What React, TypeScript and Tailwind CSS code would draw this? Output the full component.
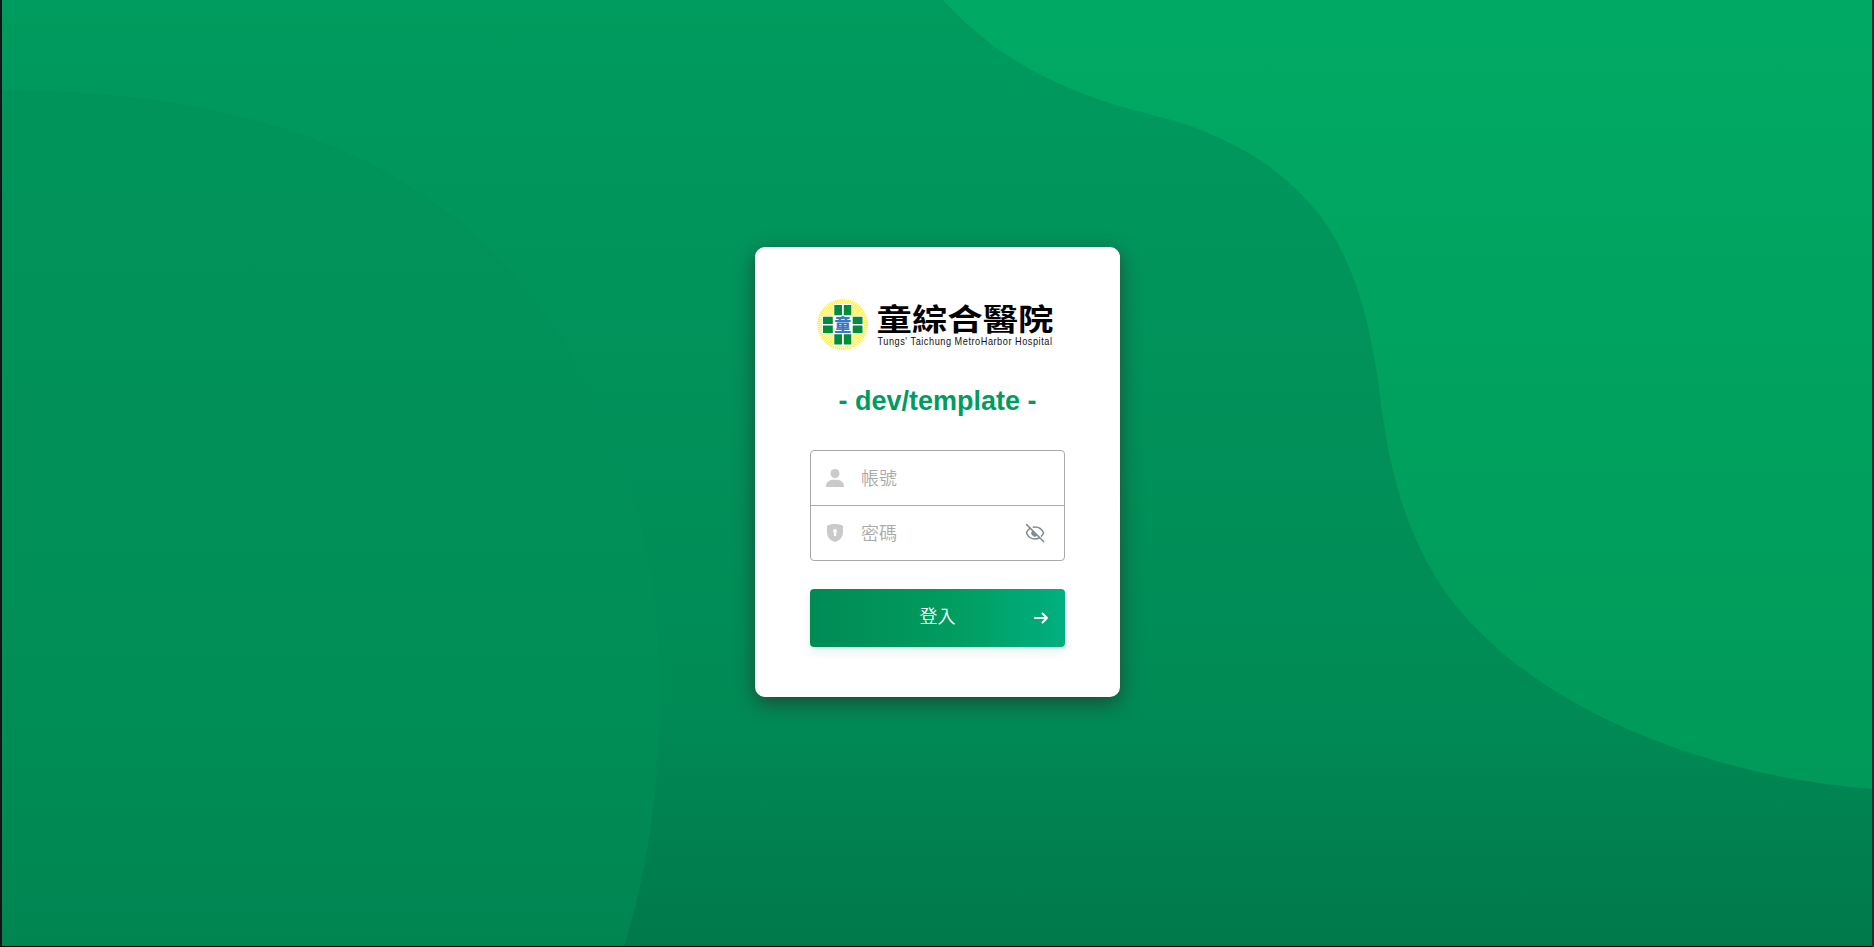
import React from "react";

function Background() {
  return (
    <svg className="absolute inset-0 h-full w-full" viewBox="0 0 1874 947" preserveAspectRatio="none" aria-hidden="true">
      <defs>
        <linearGradient id="base" x1="0" y1="0" x2="0" y2="1">
          <stop offset="0" stopColor="#009b5e" />
          <stop offset="0.42" stopColor="#009159" />
          <stop offset="0.74" stopColor="#008b55" />
          <stop offset="1" stopColor="#00794a" />
        </linearGradient>
        <linearGradient id="right" gradientUnits="userSpaceOnUse" x1="0" y1="0" x2="0" y2="789">
          <stop offset="0" stopColor="#00aa64" />
          <stop offset="1" stopColor="#009959" />
        </linearGradient>
        <linearGradient id="left" gradientUnits="userSpaceOnUse" x1="0" y1="90" x2="0" y2="947">
          <stop offset="0" stopColor="#00945a" />
          <stop offset="0.45" stopColor="#009058" />
          <stop offset="0.72" stopColor="#008e56" />
          <stop offset="1" stopColor="#008551" />
        </linearGradient>
      </defs>
      <rect width="1874" height="947" fill="url(#base)" />
      <path d="M0 90C165 90 320 120 434 202C560 289 660 470 660 690C660 780 650 862 624 947H0Z" fill="url(#left)" />
      <path d="M943 0C998 60 1065 94 1153 115C1243 137 1305 184 1336 240C1361 286 1370 330 1378 380C1388 465 1402 528 1446 593C1524 700 1690 775 1874 789V0Z" fill="url(#right)" />
      <rect width="2" height="947" fill="#141414" />
      <rect x="1872" width="2" height="947" fill="#2b2b33" />
      <rect y="946" width="1872" height="1" fill="#000" />
    </svg>
  );
}

function Emblem() {
  return (
    <svg className="size-[52px] shrink-0" viewBox="0 0 52 52" aria-hidden="true">
      <circle cx="25.7" cy="25.5" r="19" fill="none" stroke="#fff04a" strokeWidth="13" strokeDasharray="1.15 0.508" />
      <path d="M16.5 5H35V17H47V35H35V47H16.5V35H5V17H16.5Z" fill="#fff" />
      <g fill="#008c3a">
        <path d="M17.3 6H25V16.3H17.3zM26.8 6h7.5V16.3H26.8zM17.3 35.2H25V45.5H17.3zM26.8 35.2h7.5V45.5H26.8z" />
        <path d="M6 17.7H15.8V25H6zM6 26.6H15.8V34H6zM35.7 17.7H45.5V25H35.7zM35.7 26.6H45.5V34H35.7z" />
      </g>
      <text x="25.8" y="31.8" textAnchor="middle" fontSize="17" fontWeight="900" fill="#3a78c4" fontFamily="Noto Sans CJK TC, sans-serif">童</text>
    </svg>
  );
}

export default function App() {
  return (
    <main className="relative flex h-screen w-full items-center justify-center overflow-hidden font-['Liberation_Sans','Noto_Sans_CJK_TC',sans-serif]">
      <Background />
      <section className="relative mt-[-3px] ml-px flex h-[450px] w-[365px] flex-col items-center rounded-[10px] bg-white px-[55px] pt-[51px] shadow-[0_6px_20px_rgba(40,40,40,0.65)]">
        <div className="flex h-[54px] w-[241px] items-center gap-2">
          <Emblem />
          <svg className="h-[54px] w-[181px] shrink-0 overflow-visible" viewBox="0 0 181 54">
            <text x="-0.5" y="31.8" textLength="177" lengthAdjust="spacingAndGlyphs" fontSize="29.5" fontWeight="700" fill="#000" strokeLinejoin="round" fontFamily="Noto Sans CJK TC, sans-serif">童綜合醫院</text>
            <text x="0.5" y="46.7" textLength="175" lengthAdjust="spacingAndGlyphs" letterSpacing="0.7" fontSize="11.6" fill="#111" fontFamily="Liberation Sans, sans-serif">Tungs' Taichung MetroHarbor Hospital</text>
          </svg>
        </div>
        <h1 className="mt-[33px] text-[27px] leading-[33px] font-bold whitespace-nowrap text-[#009c5f]">- dev/template -</h1>
        <form className="mt-8 w-full" onSubmit={(e) => e.preventDefault()}>
          <div className="rounded-[4px] border border-[#a9a9a9]">
            <label className="flex h-[55px] items-center border-b border-[#a9a9a9] pl-[15px]">
              <svg className="size-[18px] shrink-0" viewBox="0 0 18 18" fill="#cacaca"><circle cx="9" cy="4.5" r="4.5" /><path d="M0 17.5C0 12.5 3.5 10.8 9 10.8S18 12.5 18 17.5Q18 18 17 18H1Q0 18 0 17.5Z" /></svg>
              <input className="mt-0.5 ml-[17px] w-40 text-[18px] font-[350] outline-none placeholder:text-[#a9a9a9]" placeholder="帳號" />
            </label>
            <label className="flex h-[54px] items-center pr-[19px] pl-[15px]">
              <svg className="size-[18px] shrink-0" viewBox="0 0 18 18" fill="#cacaca"><path fillRule="evenodd" d="M9 0C6 0 3 .7 1.5 1.5Q1 1.8 1 2.7V8C1 13 4 16.5 9 18C14 16.5 17 13 17 8V2.7Q17 1.8 16.5 1.5C15 .7 12 0 9 0ZM9 5A2 2 0 0 0 7.8 8.6V12H10.2V8.6A2 2 0 0 0 9 5Z" /></svg>
              <input className="mt-0.5 ml-[17px] min-w-0 flex-1 text-[18px] font-[350] outline-none placeholder:text-[#a9a9a9]" type="password" placeholder="密碼" />
              <svg className="size-5 shrink-0" viewBox="0 0 20 20" fill="none" stroke="#7f8a93" strokeWidth="1.5"><path d="M5.3 5.2C3.5 6.3 2.2 8 1.4 10C3.2 14 6.2 16 10 16C11.5 16 13 15.6 14.2 15M7.7 4.3C8.4 4.1 9.2 4 10 4C14 4 17 6.2 18.6 10C18 11.4 17.2 12.6 16 13.6M1.2 1.1L19 19" /><path d="M7.6 8A3 3 0 0 0 12 12.3Z" fill="#7f8a93" strokeWidth="1" /></svg>
            </label>
          </div>
          <button className="relative mt-7 flex h-[58px] w-full items-center justify-center rounded-[4px] bg-[linear-gradient(90deg,#008b55_0%,#009c5f_55%,#00af80_100%)] pb-px text-[18px] font-[350] text-white shadow-[0_5px_10px_rgba(0,156,95,0.12)]">
            登入
            <svg className="absolute right-4 size-4" viewBox="0 0 16 16" fill="none" stroke="#fff" strokeWidth="2" strokeLinecap="round" strokeLinejoin="round"><path d="M2 8H14M9.5 3.5L14 8L9.5 12.5" /></svg>
          </button>
        </form>
      </section>
    </main>
  );
}
